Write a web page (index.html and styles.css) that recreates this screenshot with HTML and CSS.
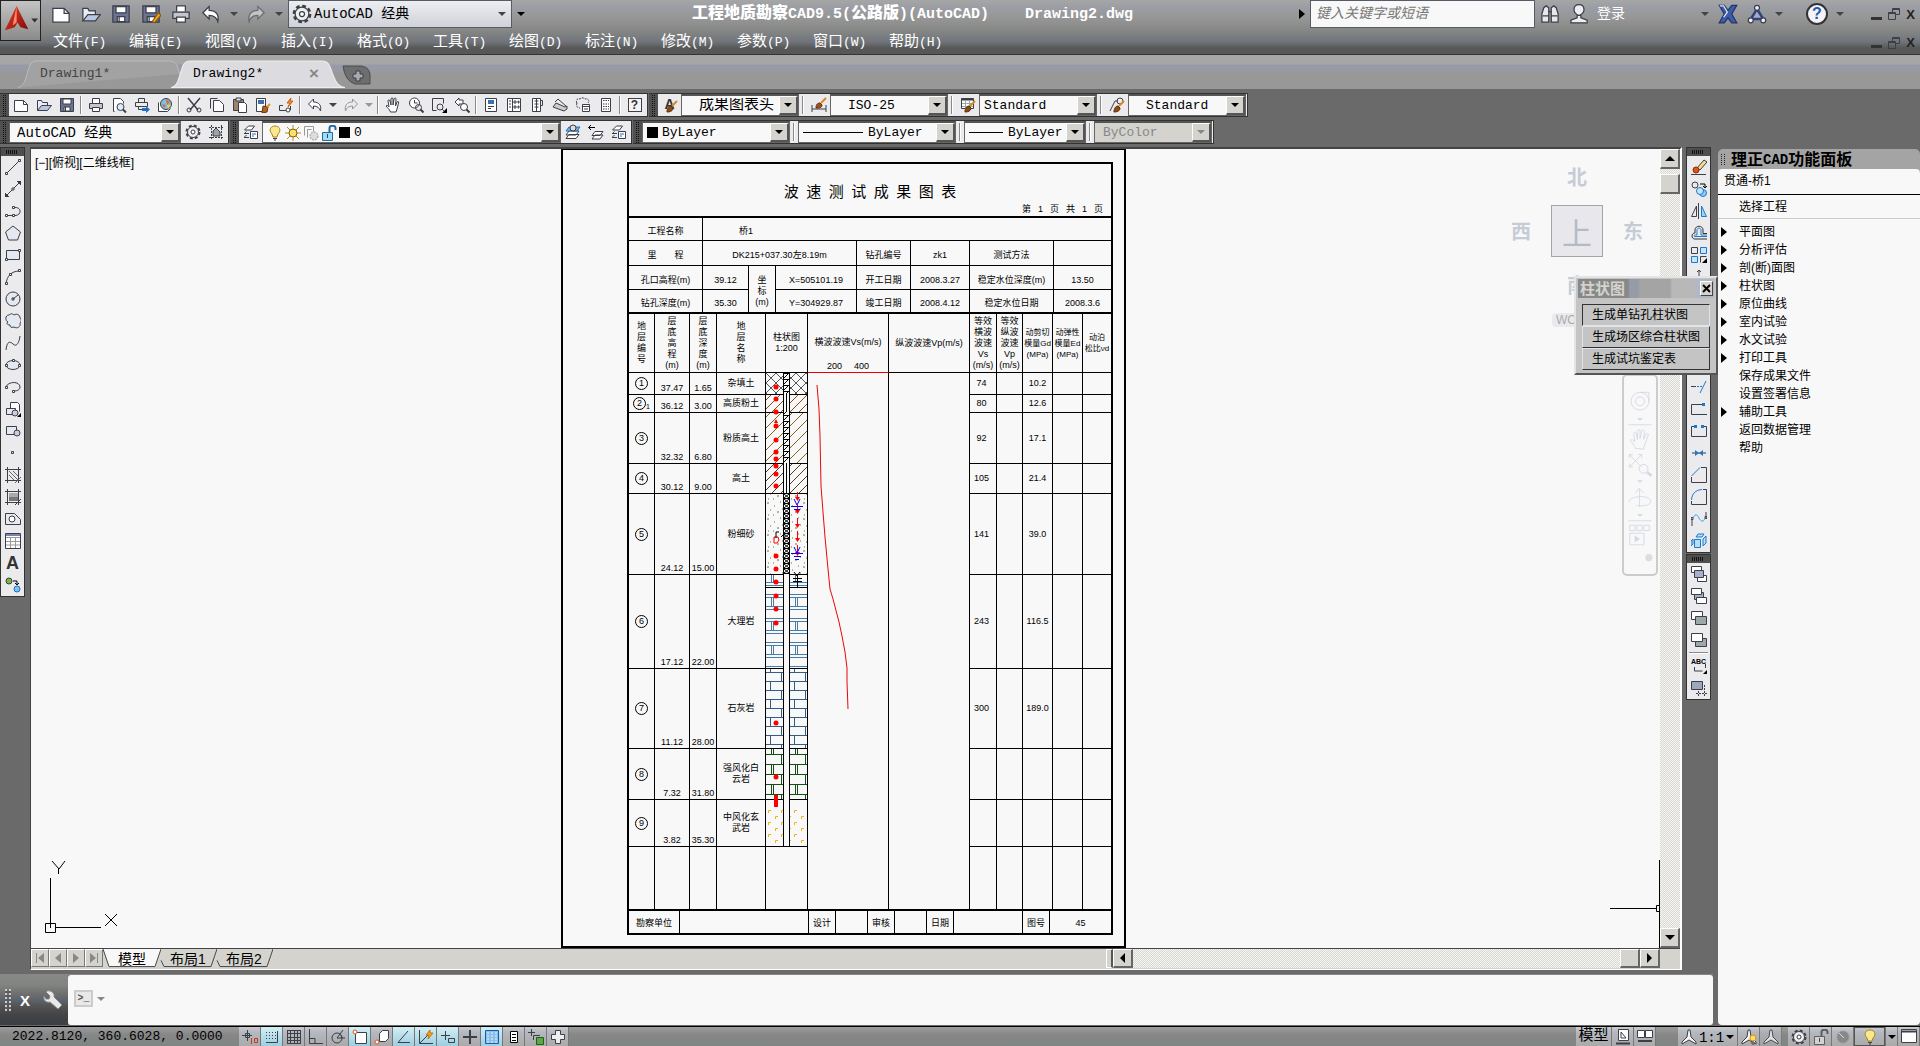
FILE: index.html
```html
<!DOCTYPE html>
<html lang="zh-CN">
<head>
<meta charset="utf-8">
<title>工程地质勘察CAD9.5(公路版)(AutoCAD) Drawing2.dwg</title>
<link rel="stylesheet" href="styles.css">
</head>
<body>
<svg class="defs" aria-hidden="true">
  <defs>
    <linearGradient id="g-red" x1="0" y1="0" x2="1" y2="1"><stop offset="0" stop-color="#f0402a"/><stop offset="1" stop-color="#7c0c06"/></linearGradient>
    <pattern id="p-cross" width="10" height="10" patternUnits="userSpaceOnUse"><path d="M0 0 10 10M10 0 0 10" stroke="#555" fill="none"/></pattern>
    <pattern id="p-d1" width="9" height="9" patternUnits="userSpaceOnUse"><path d="M-1 10 10 -1M-1 1 1 -1M8 10 10 8" stroke="#8a4a14"/></pattern>
    <pattern id="p-d2" width="11" height="11" patternUnits="userSpaceOnUse"><path d="M-1 12 12 -1M-1 1 1 -1M10 12 12 10" stroke="#846414"/></pattern>
    <pattern id="p-d3" width="9" height="9" patternUnits="userSpaceOnUse"><path d="M-1 10 10 -1M-1 1 1 -1M8 10 10 8" stroke="#553a1c"/></pattern>
    <pattern id="p-dots" width="18" height="16" patternUnits="userSpaceOnUse"><path d="M1 2h2M8 5h1M14 1h1M4 9h1M11 11h2M16 8h1M2 14h1M7 14h1" stroke="#6b7434"/></pattern>
    <pattern id="p-b6" width="24" height="24" y="212" patternUnits="userSpaceOnUse"><path d="M0 .5h24M0 9.500h24M0 12.500h24M0 21.500h24M5.500 12v9M7.500 12v9M17.500 0v9" stroke="#4a7ca8" fill="none"/></pattern>
    <pattern id="p-b7" width="24" height="18" y="299" patternUnits="userSpaceOnUse"><path d="M0 .5h24M0 9.500h24M4.500 9v9M15.500 0v9" stroke="#345c88" fill="none"/></pattern>
    <pattern id="p-b8" width="24" height="20" y="381" patternUnits="userSpaceOnUse"><path d="M0 .5h24M0 10.500h24M5.500 10v10M7.500 10v10M15.500 0v10M17.500 0v10" stroke="#145014" fill="none"/></pattern>
    <pattern id="p-b9" width="13" height="12" y="437" patternUnits="userSpaceOnUse"><path d="M2.500 3V.5H5M9.500 9V6.500H12" stroke="#f0b410" fill="none"/></pattern>
    <pattern id="p-lad" width="6" height="6" x="17" patternUnits="userSpaceOnUse"><path d="M0 .5h6M1 5 5 1" stroke="#000"/></pattern>
    <pattern id="p-xx" width="6" height="5" x="17" patternUnits="userSpaceOnUse"><path d="M0 .5h6M1 1 6 5M6 1 1 5" stroke="#000"/></pattern>
  </defs>
  <symbol id="new" viewBox="0 0 16 16"><path d="M1.500 3.500h9l4 4v7h-13z" fill="#fff"/><path d="M10.500 3.500v4h4"/></symbol>
  <symbol id="open" viewBox="0 0 16 16"><path d="M1.500 13.500v-10h4l1 2h5v3" fill="#e8eef8"/><path d="M1.500 13.500l4-5h10l-4 5z" fill="#b8c8e4"/></symbol>
  <symbol id="save" viewBox="0 0 16 16"><path d="M1.500 1.500h13v13h-13z" fill="#6c7494"/><path d="M4 2h8v5H4zM5 10h6v4H5z" fill="#fff"/><path d="M6.500 10v4"/></symbol>
  <symbol id="saveas" viewBox="0 0 16 16"><use href="#save"/><path d="M9 14 14 7l2 2-5 6z" fill="#f0a828" stroke="#8a5a10"/></symbol>
  <symbol id="print" viewBox="0 0 16 16"><path d="M4.500 6V1.500h7V6" fill="#fff"/><path d="M1.500 6.500h13v5h-13z" fill="#c4c6cc"/><path d="M4.500 10.500h7v4h-7z" fill="#fff"/></symbol>
  <symbol id="preview" viewBox="0 0 16 16"><path d="M3.500 14.500h-1v-13h7l3 3v2" fill="#fff"/><circle cx="9.500" cy="10" r="3.500" fill="#dcebf8"/><path d="M12 12.500l3 3" stroke-width="2"/></symbol>
  <symbol id="publish" viewBox="0 0 16 16"><path d="M4.500 5V1.500h6V5M1.500 5.500h12v4h-12zM4.500 9.500v3h4"/><path d="M8 11h4V9l4 3.500-4 3.500v-2H8z" fill="#1f6fc4" stroke="none"/></symbol>
  <symbol id="globe" viewBox="0 0 16 16"><path d="M1.500 5.500v9h9l3-3" fill="#fff"/><circle cx="9" cy="7" r="5.500" fill="#7cc0e8"/><path d="M9 2l4 3-3 3zM5 7l4 1-2 3z" fill="#e0682c" stroke="none"/><path d="M10 8h4l-3 4z" fill="#f4cc30" stroke="none"/></symbol>
  <symbol id="cut" viewBox="0 0 16 16"><path d="M2 1l10 12M14 1 4 13" stroke-width="1.500"/><circle cx="3" cy="13" r="2"/><circle cx="13" cy="13" r="2"/></symbol>
  <symbol id="copy" viewBox="0 0 16 16"><path d="M1.500 11.500v-10h7"/><path d="M4.500 3.500h6l4 4v7h-10z" fill="#fff"/></symbol>
  <symbol id="paste" viewBox="0 0 16 16"><path d="M1.500 2.500h10v11h-10z" fill="#9c8468"/><path d="M4 1h5v3H4z" fill="#ddd"/><path d="M6.500 5.500h6l2 2v8h-8z" fill="#fff"/></symbol>
  <symbol id="match" viewBox="0 0 16 16"><path d="M1.500 1.500h9v13h-9z" fill="#fff"/><path d="M3 3h6v4H3z" fill="#3870b4" stroke="none"/><path d="M8 9l5 1-1 5-5 1z" fill="#b4641c" stroke="#6a3408"/><path d="M12 10l3-3" stroke="#e09030" stroke-width="2"/></symbol>
  <symbol id="block" viewBox="0 0 16 16"><path d="M5 8.500H1.500v5h9M12.500 9v4"/><circle cx="10" cy="13" r="2" fill="#fff"/><path d="M13 1 9 6h3l-2 4 5-6h-3z" fill="#f09020" stroke="#c86010"/></symbol>
  <symbol id="undo" viewBox="0 0 16 16"><path d="M1.500 7l5-5v3c6 0 8 4 7 9-1-3-3-5-7-5v3z" fill="#fff"/></symbol>
  <symbol id="redo" viewBox="0 0 16 16"><path d="M14.500 7l-5-5v3c-6 0-8 4-7 9 1-3 3-5 7-5v3z" fill="#eee"/></symbol>
  <symbol id="hand" viewBox="0 0 16 16"><path d="M5.500 15c-1-3-3-4-4.500-6 1-1.500 2.500 0 3 1L3 4c0-1.500 1.500-1.500 2 0l1 4V2c0-1.500 2-1.500 2 0v6l1-6c.5-1.500 2-1 2 0l-.5 7 1.500-4c1-1 2-.5 1.500 1L12 12l-1 3z" fill="#fff"/></symbol>
  <symbol id="zoomrt" viewBox="0 0 16 16"><circle cx="6.500" cy="6" r="5" fill="#fff"/><path d="M6.500 3v3h3"/><circle cx="10.500" cy="10.500" r="3"/><path d="M12.500 12.500l3 3" stroke-width="2"/></symbol>
  <symbol id="zoomwin" viewBox="0 0 16 16"><path d="M1.500 1.500h11v5M1.500 1.500v12h4"/><circle cx="9" cy="10" r="3"/><path d="M11 12l2 2"/><path d="M16 11v5h-5z" fill="#000" stroke="none"/></symbol>
  <symbol id="zoomprev" viewBox="0 0 16 16"><path d="M1 5l4-4v2h4v4H5v2z" fill="#fff"/><circle cx="10" cy="10" r="3.500" fill="#fff"/><path d="M12.500 12.500l3 3" stroke-width="2"/></symbol>
  <symbol id="props" viewBox="0 0 16 16"><path d="M2.500 1.500h11v13h-11z" fill="#fff"/><path d="M5 3h6v4H5z" fill="#3870b4" stroke="none"/><path d="M5 9.500h6M5 11.500h3"/></symbol>
  <symbol id="dc" viewBox="0 0 16 16"><path d="M1.500 1.500h13v13h-13z" fill="#fff"/><path d="M6.500 2v12M3 4h2M3 7h2M3 10h2M8 4h2v2H8zM12 4h1v2h-1zM8 9h2v2H8zM12 9h1v2h-1z"/></symbol>
  <symbol id="tp" viewBox="0 0 16 16"><path d="M3.500 1.500h8v13h-8z" fill="#fff"/><path d="M11.500 3.500h2v5h-2M5.500 4h4M5.500 7h4M5.500 10h4M7.500 2v12"/></symbol>
  <symbol id="ssm" viewBox="0 0 16 16"><path d="M1 10l3-4 9 4 2-1v3l-3 2z" fill="#ccc"/><path d="M3 5l3-3 8 7"/></symbol>
  <symbol id="markup" viewBox="0 0 16 16"><path d="M2 6c-2-3 1-5 3-4 2-2 4-1 5 0 3-1 5 2 3 4M2 6c-1 3 0 5 3 5" stroke-dasharray="2 1"/><path d="M7.500 7.500h7v7h-7z" fill="#fff"/><path d="M8 9.500h6M9 12h4"/></symbol>
  <symbol id="calc" viewBox="0 0 16 16"><path d="M3.500 1.500h9v13h-9z" fill="#fff"/><path d="M5 3.500h6M5 7h6M5 9.500h6M5 12h6" stroke-dasharray="1.500 1"/></symbol>
  <symbol id="brush" viewBox="0 0 16 16"><path d="M10 9l5-5" stroke="#d88a20" stroke-width="2"/><path d="M5 15c0-4 2-6 4-6l2 2c0 3-3 4-6 4z" fill="#8a4a14" stroke="#5c2c08"/></symbol>
  <symbol id="dimst" viewBox="0 0 16 16"><path d="M1 8v7M15 8v7M1 12h14"/><path d="M10 6l5-5" stroke="#d88a20" stroke-width="2"/><path d="M5 11c0-4 2-5 4-5l2 2c0 3-3 3-6 3z" fill="#a05020" stroke="#5c2c08"/></symbol>
  <symbol id="tabst" viewBox="0 0 16 16"><path d="M1.500 1.500h12v10h-12z" fill="#fff"/><path d="M1.500 2.500h12" stroke-width="2"/><path d="M2 6.500h11M2 9.500h11M5.500 3v9M9.500 3v9" stroke="#9aa"/><use href="#brush"/></symbol>
  <symbol id="mlst" viewBox="0 0 16 16"><path d="M1 14 6 4h3"/><circle cx="11" cy="4" r="3"/><use href="#brush"/></symbol>
  <symbol id="gear" viewBox="0 0 16 16"><circle cx="8" cy="8" r="6.500" stroke-width="2" stroke-dasharray="3 2.100"/><circle cx="8" cy="8" r="5.500" fill="#eee"/><circle cx="8" cy="8" r="2" fill="#fff"/></symbol>
  <symbol id="wsave" viewBox="0 0 16 16"><path d="M1 3.500h14M1 13.500h14M3.500 1v14M13.500 1v14" stroke-dasharray="2 1"/><path d="M5 12V7l3-3 4 4v4z" fill="#9ca4a8"/></symbol>
  <symbol id="layers" viewBox="0 0 16 16"><path d="M1.500 6l4-4h6l-3 4zM1.500 9.500l2-2M1.500 13l2-2" fill="#fff"/><path d="M1 9.500h5M1 13.500h5"/><path d="M7.500 7.500h7v7h-7z" fill="#fff"/><path d="M9 10h4M9 12h2" stroke="#1f6fc4"/></symbol>
  <symbol id="laycur" viewBox="0 0 16 16"><path d="M1 14.500l3-4h10l-3 4zM1 11l3-4h10l-3 4z" fill="#fff"/><path d="M1 7l3-4h11l-3 4z" fill="#6cb4ec" stroke="#1f6fc4"/><circle cx="8" cy="4" r="3" fill="#ddd"/></symbol>
  <symbol id="layprev" viewBox="0 0 16 16"><path d="M1 3.500h6M3 1 .5 3.500 3 6" stroke="#000"/><path d="M4 15l3-4h8l-3 4zM4 11.500l3-4h8l-3 4z" fill="#fff"/></symbol>
  <symbol id="bulb" viewBox="0 0 16 16"><path d="M5 9C1 5 4 1 8 1s7 4 3 8l-1 3H6z" fill="#fbe88c" stroke="#a88420"/><path d="M6 13.500h4M7 15h2"/></symbol>
  <symbol id="sun" viewBox="0 0 16 16"><path d="M8 0v16M0 8h16M2 2l12 12M14 2 2 14" stroke="#b89018"/><circle cx="8" cy="8" r="4" fill="#fbe070" stroke="#806010"/></symbol>
  <symbol id="vpf" viewBox="0 0 16 16"><g stroke="#999"><path d="M1.500 10.500v-9h9v5M4.500 12.500v-8h4"/><circle cx="11" cy="11" r="4" fill="#ddd" stroke-dasharray="2 1"/></g></symbol>
  <symbol id="lock" viewBox="0 0 16 16"><path d="M8.500 7V3c0-3 6-3 6 0v2" stroke="#2468a4" stroke-width="2"/><path d="M1.500 7.500h10v8h-10z" fill="#a4dcf0" stroke="#2468a4"/><path d="M6.500 9v4" stroke="#145088"/></symbol>
  <symbol id="line" viewBox="0 0 16 16"><path d="M2 14 14 2"/><path d="M.5 13.500h2v2h-2zM13.500.5h2v2h-2z" fill="#fff"/></symbol>
  <symbol id="xline" viewBox="0 0 16 16"><path d="M2 14 14 2"/><path d="M0 16v-4l4 4zM16 0v4l-4-4z" fill="#333"/><path d="M7 7h2v2H7z" fill="#fff"/></symbol>
  <symbol id="pline" viewBox="0 0 16 16"><path d="M2 12.500h6M9 4.500c8-1 8 8 1 8"/><path d="M.5 11.500h2v2h-2zM7.500 11.500h2v2h-2zM7.500 3.500h2v2h-2z" fill="#fff"/></symbol>
  <symbol id="poly" viewBox="0 0 16 16"><path d="M8 1l7.500 6-3 8h-9l-3-8z" fill="#e4e8f0"/></symbol>
  <symbol id="rect" viewBox="0 0 16 16"><path d="M1.500 3.500h13v9h-13z" fill="#e4e8f0"/><path d="M.5 11.500h2v2h-2zM13.500 2.500h2v2h-2z" fill="#fff"/></symbol>
  <symbol id="arc" viewBox="0 0 16 16"><path d="M1 15C2 7 6 2 15 2"/><path d="M.5 13.500h2v2h-2zM4.500 4.500h2v2h-2zM13.500.5h2v2h-2z" fill="#fff"/></symbol>
  <symbol id="circ" viewBox="0 0 16 16"><circle cx="8" cy="8" r="7" fill="#e4e8f0"/><path d="M8 8l5-4M7 7h2v2H7z"/></symbol>
  <symbol id="cloud" viewBox="0 0 16 16"><path d="M3 9C0 8 0 2 4 2c2-2 4-1 5 0 3-2 6 0 6 3 2 2 1 4 0 5 1 4-3 6-6 4-3 1-4 0-4-2-3 0-4-2-2-3z" fill="#e4e8f0"/></symbol>
  <symbol id="spline" viewBox="0 0 16 16"><path d="M1 15c1-9 4-9 7-6s6 0 7-8"/></symbol>
  <symbol id="ell" viewBox="0 0 16 16"><ellipse cx="8" cy="8" rx="7" ry="4.500" fill="#e4e8f0"/><path d="M.5 7.500h2v2h-2zM13.500 7.500h2v2h-2zM7.500 2.500h2v2h-2z" fill="#fff"/></symbol>
  <symbol id="ellarc" viewBox="0 0 16 16"><path d="M1 8c2-6 14-6 14 0 0 3-3 4-6 4"/><path d="M.5 7.500h2v2h-2zM7.500 11.500h2v2h-2z" fill="#fff"/></symbol>
  <symbol id="ins" viewBox="0 0 16 16"><path d="M5.500 7V1.500h7l2 2v7" fill="#fff"/><path d="M1.500 7.500h9v6h-9z" fill="#e4e8f0"/><circle cx="10" cy="12" r="3" fill="#ccd"/><path d="M16 12v4h-4z" fill="#000" stroke="none"/></symbol>
  <symbol id="mkblk" viewBox="0 0 16 16"><path d="M1.500 3.500h10v8h-10z" fill="#e4e8f0"/><circle cx="12" cy="10" r="3" fill="#ccd"/></symbol>
  <symbol id="pt" viewBox="0 0 16 16"><path d="M6.500 6.500h2v2h-2z"/></symbol>
  <symbol id="hatch" viewBox="0 0 16 16"><path d="M0 2.500h16M0 13.500h16M2.500 0v16M13.500 0v16"/><path d="M4 4l9 9M4 8l5 5M8 4l5 5M10 16l6-6" stroke="#666"/></symbol>
  <symbol id="grad" viewBox="0 0 16 16"><path d="M4 4h9v4H4z" fill="#aaa" stroke="none"/><path d="M4 8h9v4H4z" fill="#777" stroke="none"/><path d="M0 2.500h16M0 13.500h16M2.500 0v16M13.500 0v16M10 16l6-6"/></symbol>
  <symbol id="region" viewBox="0 0 16 16"><path d="M.5 2.500h9l6 6v5H.5z" fill="#e8eaf0"/><circle cx="7" cy="8" r="3" fill="#fff"/></symbol>
  <symbol id="table" viewBox="0 0 16 16"><path d="M.5.500h15v15H.5z" fill="#fff"/><path d="M1 2h14" stroke="#7880b4" stroke-width="2"/><path d="M1 4.500h14M1 8.500h14M1 12h14M5.500 5v10M10.500 5v10" stroke="#999"/></symbol>
  <symbol id="addsel" viewBox="0 0 16 16"><circle cx="4" cy="4" r="3" fill="#78b83c"/><circle cx="12" cy="12" r="3" fill="#7cc4f0" stroke="#1f6fc4"/><path d="M8 4h4v3M10 6l2 2 2-2" stroke="#000"/></symbol>
  <symbol id="erase" viewBox="0 0 16 16"><path d="M0 15.500h15"/><path d="M6 9l7-8 3 2-7 8z" fill="#f4dc8c"/><circle cx="5" cy="11" r="3" fill="#e0541c" stroke="#8c2c08"/></symbol>
  <symbol id="mcopy" viewBox="0 0 16 16"><circle cx="4" cy="4" r="3"/><path d="M9 3h5v3M12 5l2 2 2-2" stroke="#000"/><circle cx="12" cy="12" r="3.500" fill="#8ccff4" stroke="#1f78cc"/><circle cx="9" cy="10" r="3.500" fill="#c4e6f8" stroke="#1f78cc"/></symbol>
  <symbol id="mirror" viewBox="0 0 16 16"><path d="M5.500 3v10.500h-5zM7.500 0v16"/><path d="M10.500 3v10.500h5z" fill="#9cd4f4" stroke="#1f78cc"/></symbol>
  <symbol id="offset" viewBox="0 0 16 16"><path d="M16 8.500h-4V5c0-5-8-5-8 0v3c-4 0-4 6 0 6h12" stroke="#333"/><path d="M16 11.500H4c-2 0-1-2 2-1.500V5c0-2.500 4-2.500 4 0v5h6" stroke="#1f78cc"/></symbol>
  <symbol id="array" viewBox="0 0 16 16"><path d="M.5.500h6v6h-6z"/><path d="M9.500.500h6v6h-6zM.5 9.500h6v6h-6z" fill="#c4e6f8" stroke="#1f78cc"/><path d="M9.500 15.500v-6h6"/><path d="M16 11v5h-5z" fill="#000" stroke="none"/></symbol>
  <symbol id="move" viewBox="0 0 16 16"><path d="M8 1v14M1 8h14M6 3l2-2 2 2M6 13l2 2 2-2"/></symbol>
  <symbol id="extend" viewBox="0 0 16 16"><path d="M0 7.500h5"/><path d="M6 7.500h6" stroke="#1f78cc" stroke-dasharray="2 1"/><path d="M9 14l6-12" stroke="#1f78cc"/></symbol>
  <symbol id="brkpt" viewBox="0 0 16 16"><path d="M12 3.500H.5v10H16" fill="#e8eaf0"/><path d="M11 2h3v3h-3z" fill="#1f78cc" stroke="none"/></symbol>
  <symbol id="brk" viewBox="0 0 16 16"><path d="M3 3.500H.5v10h15v-10H13" fill="#e8eaf0"/><path d="M3 2h3v3H3zM10 2h3v3h-3z" fill="#1f78cc" stroke="none"/></symbol>
  <symbol id="join" viewBox="0 0 16 16"><path d="M1 8h14"/><path d="M4 5l4 3-4 3zM12 5 8 8l4 3z" fill="#1f78cc" stroke="none"/></symbol>
  <symbol id="chamf" viewBox="0 0 16 16"><path d="M10 .5h5.500v15H.5V10"/><path d="M.5 9 9 .5" stroke="#1f78cc"/></symbol>
  <symbol id="fillet" viewBox="0 0 16 16"><path d="M12 .5h3.500v15H.5V12"/><path d="M.5 11C1 5 4 1 11 .5" stroke="#1f78cc"/></symbol>
  <symbol id="blend" viewBox="0 0 16 16"><path d="M1 8v7M15 1v7M0 6.500h2v2H0zM14 5.500h2v2h-2z"/><path d="M2 7c3-6 5-2 6 0s4 6 6 0" stroke="#38a0e4"/></symbol>
  <symbol id="explode" viewBox="0 0 16 16"><path d="M3.500 6.500h6v8h-6zM5 4l2-3h6l-2 3zM12 6l3-3v7l-3 3zM0 8l2-2v5l-2 2z" fill="#b4e0f4" stroke="#1f78cc"/></symbol>
  <symbol id="dr1" viewBox="0 0 16 16"><path d="M.5.500h10v6H.5zM6.500 9.500h9v6h-9z" fill="#fff"/><path d="M3.500 4.500h9v7h-9z" fill="#a4b0cc"/></symbol>
  <symbol id="dr2" viewBox="0 0 16 16"><path d="M3.500 4.500h9v7h-9z" fill="#a4b0cc"/><path d="M.5.500h10v6H.5zM5.500 9.500h10v6h-10z" fill="#fff"/></symbol>
  <symbol id="dr3" viewBox="0 0 16 16"><path d="M.5 1.500h11v8H.5z" fill="#fff"/><path d="M4.500 6.500h11v8h-11z" fill="#9ca8a8"/></symbol>
  <symbol id="dr4" viewBox="0 0 16 16"><path d="M4.500 6.500h11v8h-11z" fill="#9ca8a8"/><path d="M.5 1.500h11v8H.5z" fill="#fff"/></symbol>
  <symbol id="drabc" viewBox="0 0 16 16"><path d="M3.500 9v4h8M14.500 6v4"/><path d="M16 12v4h-4z" fill="#000" stroke="none"/></symbol>
  <symbol id="drh" viewBox="0 0 16 16"><path d="M.5 1.500h11v8H.5z" fill="#9ca8bc"/><path d="M5 13.500h11M7.500 11v5M13.500 5v11" stroke-dasharray="2 1"/></symbol>
  <symbol id="snap" viewBox="0 0 16 16"><path d="M2 3.500h10M2 6.500h10M2 9.500h10" stroke-dasharray="1 2"/><path d="M13.500 2v11.500H2"/></symbol>
  <symbol id="infer" viewBox="0 0 16 16"><path d="M0 6.500h10M5.500 1v11M3.500 4.500h4v4h-4z"/><path d="M9.500 9v6M12.500 9.500h3v4h-3z" stroke="#c83818"/></symbol>
  <symbol id="grid" viewBox="0 0 16 16"><path d="M1 1.500h14M1 4.500h14M1 8.500h14M1 11.500h14M1 14.500h14M1.500 1v14M4.500 1v14M8.500 1v14M11.500 1v14M14.500 1v14"/></symbol>
  <symbol id="ortho" viewBox="0 0 16 16"><path d="M1.500 0v14.500H15M2 9.500h5v5"/></symbol>
  <symbol id="polar" viewBox="0 0 16 16"><circle cx="7" cy="9" r="5"/><path d="M7 9h8M7 9l6-8M11 6l1 3"/></symbol>
  <symbol id="osnap" viewBox="0 0 16 16"><path d="M3.500 3.500h11v11h-11z" fill="#fff"/><circle cx="3" cy="3" r="2" stroke="#e0541c" fill="#fff"/></symbol>
  <symbol id="osnap3" viewBox="0 0 16 16"><path d="M5.500 4.500l3-3h6v8l-3 3h-6z" fill="#fff"/><circle cx="3" cy="13" r="2" stroke="#e0541c" fill="#fff"/></symbol>
  <symbol id="otrack" viewBox="0 0 16 16"><path d="M14 13.500H2L12 2"/></symbol>
  <symbol id="ducs" viewBox="0 0 16 16"><path d="M1.500 1v13.500H15M2 14l8-8"/><path d="M12 1 8 6h3l-1 4 5-6h-3z" fill="#f4a820" stroke="#c87010"/></symbol>
  <symbol id="dyn" viewBox="0 0 16 16"><path d="M1 6.500h9M5.500 2v9M8.500 9.500h6v4h-6z"/></symbol>
  <symbol id="lwt" viewBox="0 0 16 16"><path d="M1 8h14M8 1v14" stroke-width="2"/></symbol>
  <symbol id="tpy" viewBox="0 0 16 16"><path d="M1.500 1.500h13v13h-13z" fill="#8cc0e8" stroke="#1060b0"/><path d="M3 4h10M3 7h10M3 10h10M3 13h10" stroke="#e4f2fc" stroke-dasharray="2 2"/></symbol>
  <symbol id="qp" viewBox="0 0 16 16"><path d="M4.500 2.500h7v11h-7z" fill="#fff" stroke="#000"/><path d="M6 5.500h4M6 8.500h4M6 11.500h4" stroke="#000"/></symbol>
  <symbol id="sc" viewBox="0 0 16 16"><path d="M0 3.500h7M3.500 0v7M5.500 11V6.500H12"/><path d="M8.500 8.500h7v7h-7z" fill="#5ca848" stroke="#206014"/></symbol>
  <symbol id="plus" viewBox="0 0 16 16"><path d="M5.500 1.500h5v4h4v5h-4v4h-5v-4h-4v-5h4z" fill="#eee"/></symbol>
  <symbol id="anno" viewBox="0 0 16 16"><path d="M7 1h2l1 7 5 5v2l-7-4-7 4v-2l5-5z" fill="#f4f4f4"/></symbol>
  <symbol id="annob" viewBox="0 0 16 16"><use href="#anno"/><circle cx="12" cy="9" r="3" fill="#fce060" stroke="#e08818"/><path d="M11 13h2v2h-2z" fill="#fff"/></symbol>
  <symbol id="lay1" viewBox="0 0 16 16"><path d="M3.500.500h10v11h-10z" fill="#fff"/><path d="M6 3v6h5z"/><path d="M1 14.500h14" stroke-width="2"/></symbol>
  <symbol id="lay2" viewBox="0 0 16 16"><path d="M.5 1.500h7v7h-7zM8.500 1.500h7v7h-7z" fill="#fff"/><path d="M1 12h14" stroke-width="2"/></symbol>
  <symbol id="dot" viewBox="0 0 16 16"><circle cx="8" cy="8" r="6" fill="#888" stroke="#999"/><path d="M4 4l5 5" stroke="#ddd"/></symbol>
  <symbol id="win" viewBox="0 0 16 16"><path d="M.5.500h15v13H.5z" fill="#fff"/><path d="M1 2.500h14" stroke-width="2"/></symbol>
  <symbol id="bino" viewBox="0 0 16 16"><path d="M1.500 8l1.500-5 2-1.500L7 3v11.500H1.500zM14.500 8 13 3l-2-1.500L9 3v11.500h5.500z" fill="#e8e8ec"/><path d="M2 9.500h5M9 9.500h5M7 6h2"/></symbol>
  <symbol id="person" viewBox="0 0 16 16"><path d="M8 .5c3 0 4 2 4 4S10 9 8 9 4 6.500 4 4.500 5 .5 8 .5zM6.500 9v2l-5 2v2h13v-2l-5-2V9" fill="#eceef4"/></symbol>
  <symbol id="xch" viewBox="0 0 16 16"><path d="M1 1h4l3 4 3-4h4l-4 7 4 7h-4l-3-4-3 4H1l4-7z" fill="#3c5ca8" stroke="#223468"/><path d="M1.500 1.500h3l3 5-3 4" stroke="#dce4f4"/></symbol>
  <symbol id="a360" viewBox="0 0 16 16"><path d="M8 4l5 8H3z" fill="#aab" stroke="#2c4484" stroke-width="2"/><circle cx="8" cy="3" r="2" fill="#eef"/><circle cx="3" cy="13" r="2" fill="#eef"/><circle cx="13" cy="13" r="2" fill="#eef"/></symbol>
  <symbol id="winrest" viewBox="0 0 12 12"><path d="M4.500 4V.500h7v6H8M.5 4.500h7v7h-7z"/><path d="M4.500 1.500h7M.5 5.500h7"/></symbol>
  <symbol id="wrench" viewBox="0 0 20 20"><path d="M3 2l4 4-1 3-3 0-2-3c-1 4 2 7 6 6l8 7 4-4-8-8c1-4-3-7-7-6z" fill="#e8e8e8" stroke="#888"/></symbol>
</svg>

<header class="top">
  <button class="app" aria-label="应用程序菜单"><svg viewBox="0 0 40 40"><path d="M16 5l12 24-8-2-3-5-3 5-10 3z" fill="url(#g-red)"/><path d="M16 5l-4 20 4-3z" fill="#ff8a70"/><path d="M31 18h7l-3.500 4z" fill="#333"/></svg></button>
  <div class="top-rows">
    <div class="title-row">
      <div class="qat">
        <button aria-label="新建"><svg><use href="#new"/></svg></button>
        <button aria-label="打开"><svg><use href="#open"/></svg></button>
        <button aria-label="保存"><svg><use href="#save"/></svg></button>
        <button aria-label="另存为"><svg><use href="#saveas"/></svg></button>
        <button aria-label="打印"><svg><use href="#print"/></svg></button>
        <button aria-label="放弃"><svg><use href="#undo"/></svg></button>
        <button class="dd" aria-label="放弃列表"><i class="tri"></i></button>
        <button class="dim" aria-label="重做"><svg><use href="#redo"/></svg></button>
        <button class="dd" aria-label="重做列表"><i class="tri"></i></button>
      </div>
      <label class="ws"><svg><use href="#gear"/></svg><select aria-label="工作空间"><option>AutoCAD 经典</option></select><i class="tri"></i></label>
      <button class="dd more" aria-label="自定义快速访问"><i class="tri black"></i></button>
      <h1><b>工程地质勘察</b>CAD9.5(<b>公路版</b>)(AutoCAD)<span>Drawing2.dwg</span></h1>
      <div class="info">
        <i class="tri-r"></i>
        <input type="text" placeholder="键入关键字或短语" aria-label="搜索">
        <button aria-label="搜索"><svg><use href="#bino"/></svg></button>
        <button class="login"><svg><use href="#person"/></svg>登录</button>
        <button class="dd" aria-label="登录菜单"><i class="tri"></i></button>
        <button aria-label="Exchange"><svg><use href="#xch"/></svg></button>
        <button aria-label="Autodesk 360"><svg><use href="#a360"/></svg></button>
        <button class="dd" aria-label="联机菜单"><i class="tri"></i></button>
        <button class="q" aria-label="帮助">?</button>
        <button class="dd" aria-label="帮助菜单"><i class="tri"></i></button>
      </div>
      <div class="wc"><button aria-label="最小化"><i></i></button><button aria-label="还原"><svg><use href="#winrest"/></svg></button><button aria-label="关闭">X</button></div>
    </div>
    <nav class="menu">
      <a href="#">文件<s>(F)</s></a><a href="#">编辑<s>(E)</s></a><a href="#">视图<s>(V)</s></a><a href="#">插入<s>(I)</s></a><a href="#">格式<s>(O)</s></a><a href="#">工具<s>(T)</s></a><a href="#">绘图<s>(D)</s></a><a href="#">标注<s>(N)</s></a><a href="#">修改<s>(M)</s></a><a href="#">参数<s>(P)</s></a><a href="#">窗口<s>(W)</s></a><a href="#">帮助<s>(H)</s></a>
      <div class="wc"><button aria-label="最小化图形"><i></i></button><button aria-label="还原图形"><svg><use href="#winrest"/></svg></button><button aria-label="关闭图形">X</button></div>
    </nav>
  </div>
</header>

<div class="filetabs">
  <a class="ft" href="#"><svg viewBox="0 0 162 28" preserveAspectRatio="none"><path d="M0 27.500C8 26 8 14 12 5q2-4 7-4h132q6 0 8 5l3 8" /></svg><span>Drawing1*</span></a>
  <a class="ft on" href="#"><svg viewBox="0 0 170 28" preserveAspectRatio="none"><path d="M0 27.500C8 26 8 14 12 5q2-4 7-4h128q6 0 8 5c4 9 5 20 15 21.500z"/></svg><span>Drawing2*</span><em>×</em></a>
  <button class="addtab" aria-label="新图形"><svg viewBox="0 0 30 20"><path d="M1 1h19q8 2 8 9v9h-15Q3 16 1 1z" fill="#6e6e6e" stroke="#4c4c4c"/><path d="M14 6h4v3h3v4h-3v3h-4v-3h-3V9h3z" fill="#aaa"/></svg></button>
</div>

<div class="bars">
  <div class="barrow">
    <div class="bar"><i class="grip"></i>
      <button aria-label="新建"><svg><use href="#new"/></svg></button><button aria-label="打开"><svg><use href="#open"/></svg></button><button aria-label="保存"><svg><use href="#save"/></svg></button><i class="sep"></i>
      <button aria-label="打印"><svg><use href="#print"/></svg></button><button aria-label="预览"><svg><use href="#preview"/></svg></button><button aria-label="发布"><svg><use href="#publish"/></svg></button><button aria-label="三维DWF"><svg><use href="#globe"/></svg></button><i class="sep"></i>
      <button aria-label="剪切"><svg><use href="#cut"/></svg></button><button aria-label="复制"><svg><use href="#copy"/></svg></button><button aria-label="粘贴"><svg><use href="#paste"/></svg></button><button aria-label="特性匹配"><svg><use href="#match"/></svg></button><button aria-label="块编辑器"><svg><use href="#block"/></svg></button><i class="sep"></i>
      <button aria-label="放弃"><svg><use href="#undo"/></svg></button><button class="dd" aria-label="放弃列表"><i class="tri"></i></button><button class="dim" aria-label="重做"><svg><use href="#redo"/></svg></button><button class="dd dim" aria-label="重做列表"><i class="tri"></i></button><i class="sep"></i>
      <button aria-label="平移"><svg><use href="#hand"/></svg></button><button aria-label="实时缩放"><svg><use href="#zoomrt"/></svg></button><button aria-label="窗口缩放"><svg><use href="#zoomwin"/></svg></button><button aria-label="缩放上一个"><svg><use href="#zoomprev"/></svg></button><i class="sep"></i>
      <button aria-label="特性"><svg><use href="#props"/></svg></button><button aria-label="设计中心"><svg><use href="#dc"/></svg></button><button aria-label="工具选项板"><svg><use href="#tp"/></svg></button><button aria-label="图纸集"><svg><use href="#ssm"/></svg></button><button aria-label="标记集"><svg><use href="#markup"/></svg></button><button aria-label="计算器"><svg><use href="#calc"/></svg></button><i class="sep"></i>
      <button aria-label="帮助"><span class="boxed">?</span></button>
    </div>
    <div class="bar wide"><i class="grip"></i>
      <button class="stack" aria-label="文字样式"><span class="glyph-a">A</span><svg><use href="#brush"/></svg></button><label class="combo w-style zh"><select aria-label="文字样式"><option>成果图表头</option></select><i class="arrow"></i></label><i class="sep"></i>
      <button aria-label="标注样式"><svg><use href="#dimst"/></svg></button><label class="combo w-style in"><select aria-label="标注样式"><option>ISO-25</option></select><i class="arrow"></i></label><i class="sep"></i>
      <button aria-label="表格样式"><svg><use href="#tabst"/></svg></button><label class="combo w-style"><select aria-label="表格样式"><option>Standard</option></select><i class="arrow"></i></label><i class="sep"></i>
      <button aria-label="多重引线样式"><svg><use href="#mlst"/></svg></button><label class="combo w-style in"><select aria-label="多重引线样式"><option>Standard</option></select><i class="arrow"></i></label>
    </div>
  </div>
  <div class="barrow">
    <div class="bar"><i class="grip"></i>
      <label class="combo w-ws"><select aria-label="工作空间切换"><option>AutoCAD 经典</option></select><i class="arrow"></i></label>
      <button aria-label="工作空间设置"><svg><use href="#gear"/></svg></button><button aria-label="我的工作空间"><svg><use href="#wsave"/></svg></button>
    </div>
    <div class="bar"><i class="grip"></i>
      <button aria-label="图层特性"><svg><use href="#layers"/></svg></button>
      <label class="combo w-layer"><svg><use href="#bulb"/></svg><svg><use href="#sun"/></svg><svg><use href="#vpf"/></svg><svg><use href="#lock"/></svg><i class="sw"></i><select aria-label="图层"><option>0</option></select><i class="arrow"></i></label>
      <button aria-label="置为当前"><svg><use href="#laycur"/></svg></button><button aria-label="上一个图层"><svg><use href="#layprev"/></svg></button><button aria-label="图层状态"><svg><use href="#layers"/></svg></button>
    </div>
    <div class="bar wide"><i class="grip"></i>
      <label class="combo w-color"><i class="sw"></i><select aria-label="颜色"><option>ByLayer</option></select><i class="arrow"></i></label><i class="sep"></i>
      <label class="combo w-lt"><i class="ln"></i><select aria-label="线型"><option>ByLayer</option></select><i class="arrow"></i></label><i class="sep"></i>
      <label class="combo w-lw"><i class="ln short"></i><select aria-label="线宽"><option>ByLayer</option></select><i class="arrow"></i></label><i class="sep"></i>
      <label class="combo w-ps off"><select aria-label="打印样式" disabled><option>ByColor</option></select><i class="arrow"></i></label>
    </div>
  </div>
</div>

<div class="work">
  <div class="main">
    <div class="dock">
      <div class="vbar"><i class="vgrip"></i>
        <button aria-label="直线"><svg><use href="#line"/></svg></button><button aria-label="构造线"><svg><use href="#xline"/></svg></button><button aria-label="多段线"><svg><use href="#pline"/></svg></button><button aria-label="多边形"><svg><use href="#poly"/></svg></button><button aria-label="矩形"><svg><use href="#rect"/></svg></button><button aria-label="圆弧"><svg><use href="#arc"/></svg></button><button aria-label="圆"><svg><use href="#circ"/></svg></button><button aria-label="修订云线"><svg><use href="#cloud"/></svg></button><button aria-label="样条曲线"><svg><use href="#spline"/></svg></button><button aria-label="椭圆"><svg><use href="#ell"/></svg></button><button aria-label="椭圆弧"><svg><use href="#ellarc"/></svg></button><button aria-label="插入块"><svg><use href="#ins"/></svg></button><button aria-label="创建块"><svg><use href="#mkblk"/></svg></button><button aria-label="点"><svg><use href="#pt"/></svg></button><button aria-label="图案填充"><svg><use href="#hatch"/></svg></button><button aria-label="渐变色"><svg><use href="#grad"/></svg></button><button aria-label="面域"><svg><use href="#region"/></svg></button><button aria-label="表格"><svg><use href="#table"/></svg></button><button aria-label="多行文字"><span class="glyph-big">A</span></button><button aria-label="添加选定对象"><svg><use href="#addsel"/></svg></button>
      </div>
      <div class="doc">
        <div class="view">
          <div class="canvas">
            <div class="vplabel">[−][俯视][二维线框]</div>

            <div class="paper"><div class="sheet">
              <div class="sheet-title"><h2>波&ensp;速&ensp;测&ensp;试&ensp;成&ensp;果&ensp;图&ensp;表</h2><p>第&ensp;&nbsp;1&ensp;&nbsp;页&ensp;&nbsp;共&ensp;&nbsp;1&ensp;&nbsp;页</p></div>
              <table class="meta">
                <colgroup><col class="c74"><col class="c46"><col class="c27"><col class="c81"><col class="c54"><col class="c59"><col class="c84"><col></colgroup>
                <tr class="r23"><th>工程名称</th><td colspan="7" class="proj">桥1</td></tr>
                <tr class="r25"><th>里　　程</th><td colspan="3">DK215+037.30左8.19m</td><th>钻孔编号</th><td>zk1</td><th>测试方法</th><td></td></tr>
                <tr class="r24"><th>孔口高程(m)</th><td>39.12</td><th rowspan="2" class="tall">坐<br>标<br>(m)</th><td>X=505101.19</td><th>开工日期</th><td>2008.3.27</td><th>稳定水位深度(m)</th><td>13.50</td></tr>
                <tr class="r24 thick"><th>钻孔深度(m)</th><td>35.30</td><td>Y=304929.87</td><th>竣工日期</th><td>2008.4.12</td><th>稳定水位日期</th><td>2008.3.6</td></tr>
              </table>
              <table class="strata">
                <colgroup><col class="c26"><col class="c35"><col class="c27"><col class="c49"><col class="c42"><col class="c81"><col class="c81"><col class="c27"><col class="c26"><col class="c30"><col class="c30"><col></colgroup>
                <tr class="r59"><th>地<br>层<br>编<br>号</th><th>层<br>底<br>高<br>程<br>(m)</th><th>层<br>底<br>深<br>度<br>(m)</th><th>地<br>层<br>名<br>称</th><th>柱状图<br>1:200</th><th class="vs">横波波速Vs(m/s)<span><u>200</u><u>400</u></span></th><th>纵波波速Vp(m/s)</th><th>等效<br>横波<br>波速<br>Vs<br>(m/s)</th><th>等效<br>纵波<br>波速<br>Vp<br>(m/s)</th><th class="sm">动剪切<br>模量Gd<br>(MPa)</th><th class="sm">动弹性<br>模量Ed<br>(MPa)</th><th class="sm">动泊<br>松比νd</th></tr>
                <tr class="r22"><td><b>1</b></td><td class="lo">37.47</td><td class="lo">1.65</td><td>杂填土</td>
                  <td rowspan="9" class="plot"><svg viewBox="0 0 41 473">
                    <path d="M0 0h41v21H0z" fill="url(#p-cross)"/><path d="M0 22h41v17H0z" fill="url(#p-d1)"/><path d="M0 40h41v50H0z" fill="url(#p-d2)"/><path d="M0 91h41v29H0z" fill="url(#p-d3)"/><path d="M0 121h41v80H0z" fill="url(#p-dots)"/><path d="M0 202h41v93H0z" fill="url(#p-b6)"/><path d="M0 296h41v79H0z" fill="url(#p-b7)"/><path d="M0 376h41v50H0z" fill="url(#p-b8)"/><path d="M0 436h41v36H0z" fill="url(#p-b9)"/>
                    <path d="M0 21.500h41M0 39.500h41M0 90.500h41M0 120.500h41M0 201.500h41M0 295.500h41M0 375.500h41M0 426.500h41" stroke="#000"/>
                    <path d="M17 0h7v473h-7z" fill="#f8f8f8"/><path d="M17 0h7v21h-7zM17 39h7v51h-7z" fill="url(#p-lad)"/><path d="M17 120h7v81h-7z" fill="url(#p-xx)"/>
                    <path d="M17.500 0v473M23.500 0v473M20.500 21v18M20.500 90v30" stroke="#000"/>
                    <g fill="#f00"><circle cx="10" cy="14" r="2.500"/><circle cx="10" cy="26" r="2.500"/><circle cx="10" cy="39" r="2.500"/><circle cx="10" cy="53" r="2.500"/><path d="M10 46l2 4H8z"/><circle cx="10" cy="67" r="2.500"/><circle cx="10" cy="79" r="2.500"/><circle cx="10" cy="86" r="2.500"/><circle cx="10" cy="93" r="2.500"/><circle cx="10" cy="101" r="2.500"/><circle cx="10" cy="113" r="2.500"/><circle cx="10" cy="183" r="2.500"/><circle cx="10" cy="196" r="2.500"/><circle cx="10" cy="209" r="2.500"/><circle cx="10" cy="223" r="2.500"/><circle cx="10" cy="236" r="2.500"/><circle cx="10" cy="250" r="2.500"/><circle cx="10" cy="350" r="2.500"/><circle cx="10" cy="404" r="2.500"/><path d="M8 422h4v12H8z"/></g>
                    <path d="M8 164h4l1 3-2 3H8z" fill="none" stroke="#f00"/><path d="M13 159h-3v6M15 164l3-3v4" fill="none" stroke="#000"/>
                    <path d="M31.500 119v8M31.500 132v8M31.500 145v9M31.500 158v9M31.500 172v8" stroke="#f00" fill="none"/><path d="M29 124h5l-2.500 4zM29 137h5l-2.500 4zM29 151h5l-2.500 4zM29 165h5l-2.500 4zM29 179h5l-2.500 4z" fill="#f00"/>
                    <path d="M28 126l3 6 3-6M25 133.500h12M28 136.500h6M28 174l3 6 3-6M25 180.500h12M28 183.500h7M29 186.500h4" stroke="#00f" fill="none"/>
                    <path d="M28 199l3 4 3-4M27 205.500h9M27 208.500h9M31.500 203v12M0 214.500h17M24 214.500h17" stroke="#000" fill="none"/>
                  </svg></td>
                  <td rowspan="10" class="plot"><svg viewBox="0 0 80 536"><path d="M9 12l2 24 1 27 1 50 2 26 2 25 3 32 2 20 3 10 6 23 3 14 3 16 2 16 0 14 1 27" fill="none" stroke="#e80808"/></svg></td><td rowspan="10"></td>
                  <td class="n">74</td><td></td><td>10.2</td><td></td><td></td></tr>
                <tr class="r18"><td><b>2</b><sub>1</sub></td><td class="lo">36.12</td><td class="lo">3.00</td><td>高质粉土</td><td class="n">80</td><td></td><td>12.6</td><td></td><td></td></tr>
                <tr class="r51"><td><b>3</b></td><td class="lo">32.32</td><td class="lo">6.80</td><td>粉质高土</td><td class="n">92</td><td></td><td>17.1</td><td></td><td></td></tr>
                <tr class="r30"><td><b>4</b></td><td class="lo">30.12</td><td class="lo">9.00</td><td>高土</td><td class="n">105</td><td></td><td>21.4</td><td></td><td></td></tr>
                <tr class="r81"><td><b>5</b></td><td class="lo">24.12</td><td class="lo">15.00</td><td>粉细砂</td><td class="n">141</td><td></td><td>39.0</td><td></td><td></td></tr>
                <tr class="r94"><td><b>6</b></td><td class="lo">17.12</td><td class="lo">22.00</td><td>大理岩</td><td class="n">243</td><td></td><td>116.5</td><td></td><td></td></tr>
                <tr class="r80"><td><b>7</b></td><td class="lo">11.12</td><td class="lo">28.00</td><td>石灰岩</td><td class="n">300</td><td></td><td>189.0</td><td></td><td></td></tr>
                <tr class="r51"><td><b>8</b></td><td class="lo">7.32</td><td class="lo">31.80</td><td>强风化白<br>云岩</td><td></td><td></td><td></td><td></td><td></td></tr>
                <tr class="r47"><td><b>9</b></td><td class="lo">3.82</td><td class="lo">35.30</td><td>中风化玄<br>武岩</td><td></td><td></td><td></td><td></td><td></td></tr>
                <tr class="r64 thick"><td></td><td></td><td></td><td></td><td></td><td></td><td></td><td></td><td></td><td></td></tr>
              </table>
              <table class="foot">
                <colgroup><col class="c51"><col class="c129"><col class="c27"><col class="c32"><col class="c27"><col class="c32"><col class="c27"><col class="c69"><col class="c27"><col></colgroup>
                <tr class="r22"><th>勘察单位</th><td></td><th>设计</th><td></td><th>审核</th><td></td><th>日期</th><td></td><th>图号</th><td>45</td></tr>
              </table>
            </div></div>

            <svg class="ucs" viewBox="0 0 76 76"><path d="M6.500 18v50M11 67.500h46M1.500 63.500h10v9H1.500zM8 1l7 8 6-8M14.500 9v5M61 54l12 12M73 54 61 66" fill="none" stroke="#000"/></svg>
            <svg class="ucs2" viewBox="0 0 50 88"><path d="M49.500 0v88M0 48.500h46M46.500 45.500h4v6h-4z" fill="none" stroke="#000"/></svg>

            <div class="cube"><span class="n">北</span><span class="w">西</span><button>上</button><span class="e">东</span><span class="s">南</span><span class="wcs">WCS</span></div>
            <svg class="navbar" viewBox="0 0 36 202"><g fill="none" stroke="#d2d8e4"><circle cx="18" cy="18" r="10"/><circle cx="18" cy="18" r="5"/><path d="M28 8v10M18 8h10M5 44.500h26M5 152.500h26" /><path d="M13 71c-1-3-4-6-6-9 2-2 4 0 5 2l-1-10c1-2 3-1 3 1l1 6V51c1-2 3-1 3 0v9l2-9c1-1 3-1 3 1l-1 9 3-6c2-1 3 0 2 2l-4 11-1 4z"/><path d="M6 78l14 14M20 78 6 92M6 82v-4h4M16 78h4v4M6 88v4h4"/><circle cx="22" cy="94" r="5"/><path d="M26 98l5 4" stroke-width="3"/><path d="M17.500 117v20M13 121l4-5 5 5M6 131c-1-6 24-9 24 0 0 4-10 6-16 4M6.500 157.500h6v6h-6zM14.500 157.500h6v6h-6zM22.500 157.500h6v6h-6zM6.500 166.500h16v13h-16z"/></g><path d="M15 37h6l-3 3zM15 107h6l-3 3zM15 145h6l-3 3zM12 169l6 4-6 4z" fill="#d2d8e4"/><circle cx="28" cy="194" r="4" fill="#ddd"/></svg>
          </div>
          <div class="vscroll"><button aria-label="向上"><i class="t-up"></i></button><i class="track gap"></i><i class="thumb"></i><i class="track"></i><button aria-label="向下"><i class="t-dn"></i></button></div>
        </div>
        <div class="layout">
          <button class="nv" aria-label="第一个"><svg viewBox="0 0 12 12"><path d="M2 1h1v10H2zM10 1v10L4 6z"/></svg></button><button class="nv" aria-label="上一个"><svg viewBox="0 0 12 12"><path d="M9 1v10L3 6z"/></svg></button><button class="nv" aria-label="下一个"><svg viewBox="0 0 12 12"><path d="M3 1v10l6-5z"/></svg></button><button class="nv" aria-label="最后一个"><svg viewBox="0 0 12 12"><path d="M2 1v10l6-5zM9 1h1v10H9z"/></svg></button>
          <a class="lt on" href="#"><svg viewBox="0 0 58 20" preserveAspectRatio="none"><path d="M0 0l6 18.500h46L58 0"/></svg><span>模型</span></a>
          <a class="lt" href="#"><svg viewBox="0 0 58 20" preserveAspectRatio="none"><path d="M2 12l3 6.500h47L58 0"/></svg><span>布局1</span></a>
          <a class="lt" href="#"><svg viewBox="0 0 58 20" preserveAspectRatio="none"><path d="M2 12l3 6.500h47L58 0"/></svg><span>布局2</span></a>
          <i class="split"></i>
          <div class="hscroll"><button aria-label="向左"><i class="t-lt"></i></button><i class="track"></i><i class="thumb"></i><button aria-label="向右"><i class="t-rt"></i></button></div>
          <i class="corner"></i>
        </div>
      </div>
      <div class="rbars">
        <div class="vbar"><i class="vgrip"></i>
          <button aria-label="删除"><svg><use href="#erase"/></svg></button><button aria-label="复制"><svg><use href="#mcopy"/></svg></button><button aria-label="镜像"><svg><use href="#mirror"/></svg></button><button aria-label="偏移"><svg><use href="#offset"/></svg></button><button aria-label="阵列"><svg><use href="#array"/></svg></button><button aria-label="移动"><svg><use href="#move"/></svg></button><button aria-label="旋转"><svg><use href="#circ"/></svg></button><button aria-label="缩放"><svg><use href="#rect"/></svg></button><button aria-label="拉伸"><svg><use href="#rect"/></svg></button><button aria-label="修剪"><svg><use href="#extend"/></svg></button><button aria-label="延伸"><svg><use href="#extend"/></svg></button><button aria-label="打断于点"><svg><use href="#brkpt"/></svg></button><button aria-label="打断"><svg><use href="#brk"/></svg></button><button aria-label="合并"><svg><use href="#join"/></svg></button><button aria-label="倒角"><svg><use href="#chamf"/></svg></button><button aria-label="圆角"><svg><use href="#fillet"/></svg></button><button aria-label="光顺曲线"><svg><use href="#blend"/></svg></button><button aria-label="分解"><svg><use href="#explode"/></svg></button>
        </div>
        <div class="vbar"><i class="vgrip"></i>
          <button aria-label="前置"><svg><use href="#dr1"/></svg></button><button aria-label="后置"><svg><use href="#dr2"/></svg></button><button aria-label="置于对象之上"><svg><use href="#dr3"/></svg></button><button aria-label="置于对象之下"><svg><use href="#dr4"/></svg></button><i class="hsep"></i><button class="stack" aria-label="注释前置"><span class="abc">ABC</span><svg><use href="#drabc"/></svg></button><button aria-label="填充后置"><svg><use href="#drh"/></svg></button>
        </div>
      </div>
    </div>
    <div class="cmd">
      <div class="cmd-h"><i class="dots"></i><button aria-label="关闭命令行">X</button><button aria-label="自定义"><svg><use href="#wrench"/></svg></button></div>
      <div class="cmd-b"><button class="prompt" aria-label="最近命令">&gt;_</button><i class="tri grey"></i><input type="text" aria-label="命令行"></div>
    </div>
  </div>
  <aside class="panel">
    <h2><i class="dots"></i>理正<s>CAD</s>功能面板</h2>
    <div class="panel-b">
      <p class="pj">贯通-桥1</p>
      <a href="#" class="sel">选择工程</a>
      <ul>
        <li class="sub"><a href="#">平面图</a></li><li class="sub"><a href="#">分析评估</a></li><li class="sub"><a href="#">剖(断)面图</a></li><li class="sub"><a href="#">柱状图</a></li><li class="sub"><a href="#">原位曲线</a></li><li class="sub"><a href="#">室内试验</a></li><li class="sub"><a href="#">水文试验</a></li><li class="sub"><a href="#">打印工具</a></li><li><a href="#">保存成果文件</a></li><li><a href="#">设置签署信息</a></li><li class="sub"><a href="#">辅助工具</a></li><li><a href="#">返回数据管理</a></li><li><a href="#">帮助</a></li>
      </ul>
    </div>
  </aside>
  <div class="popup">
    <div class="popup-t"><span>柱状图</span><button aria-label="关闭"><svg viewBox="0 0 9 9"><path d="M1 1l7 7M8 1 1 8"/></svg></button></div>
    <div class="popup-b"><button class="cur">生成单钻孔柱状图</button><button>生成场区综合柱状图</button><button>生成试坑鉴定表</button></div>
  </div>
</div>

<footer class="status">
  <output>2022.8120, 360.6028, 0.0000</output>
  <button aria-label="推断约束"><svg><use href="#infer"/></svg></button><button class="on" aria-label="捕捉"><svg><use href="#snap"/></svg></button><button aria-label="栅格"><svg><use href="#grid"/></svg></button><button aria-label="正交"><svg><use href="#ortho"/></svg></button><button aria-label="极轴"><svg><use href="#polar"/></svg></button><button class="on" aria-label="对象捕捉"><svg><use href="#osnap"/></svg></button><button aria-label="三维捕捉"><svg><use href="#osnap3"/></svg></button><button class="on" aria-label="对象追踪"><svg><use href="#otrack"/></svg></button><button class="on" aria-label="动态UCS"><svg><use href="#ducs"/></svg></button><button class="on" aria-label="动态输入"><svg><use href="#dyn"/></svg></button><button aria-label="线宽"><svg><use href="#lwt"/></svg></button><button class="on" aria-label="透明度"><svg><use href="#tpy"/></svg></button><button aria-label="快捷特性"><svg><use href="#qp"/></svg></button><button aria-label="选择循环"><svg><use href="#sc"/></svg></button><button aria-label="注释监视器"><svg><use href="#plus"/></svg></button>
  <i class="sp"></i>
  <button class="model">模型</button><button aria-label="快速查看布局"><svg><use href="#lay1"/></svg></button><button aria-label="快速查看图形"><svg><use href="#lay2"/></svg></button><i class="g22"></i>
  <button class="scale"><svg><use href="#anno"/></svg><span>1:1</span><i class="tri black"></i></button><button aria-label="注释可见性"><svg><use href="#annob"/></svg></button><button class="dim" aria-label="自动缩放"><svg><use href="#anno"/></svg></button><i class="g6"></i>
  <button aria-label="切换工作空间"><svg><use href="#gear"/></svg></button><button aria-label="锁定"><svg class="mono"><use href="#lock"/></svg></button><button aria-label="硬件加速"><svg><use href="#dot"/></svg></button><button class="iso" aria-label="隔离对象"><svg><use href="#bulb"/></svg></button><button class="dd" aria-label="状态栏菜单"><i class="tri black"></i></button><button aria-label="全屏显示"><svg><use href="#win"/></svg></button>
</footer>
</body>
</html>
```
FILE: styles.css
```css
* { box-sizing: border-box; }
html, body { height: 100%; }
body {
  margin: 0; display: flex; flex-direction: column; min-height: 100vh; overflow: hidden;
  background: #6a6a6a; color: #000;
  font: 13px/16px "Liberation Mono", "Noto Sans CJK SC", monospace;
}
button { border: 0; padding: 0; margin: 0; background: none; font: inherit; color: inherit; display: flex; align-items: center; justify-content: center; flex: none; }
a { color: inherit; text-decoration: none; }
s { text-decoration: none; }
select, input { font: inherit; color: inherit; border: 0; background: none; margin: 0; padding: 0; appearance: none; min-width: 0; outline: 0; }
svg { width: 16px; height: 16px; fill: none; stroke: #3c3e48; flex: none; display: block; }
.defs { position: absolute; width: 0; height: 0; }
.tri { border: 4px solid transparent; border-top: 4px solid #444; border-bottom: 0; width: 0; height: 0; flex: none; }
.tri.black { border-top-color: #000; }
.tri.grey { border-top-color: #888; }
.dim { opacity: .5; }
.boxed { width: 14px; height: 14px; border: 1px solid #3c3e48; background: #f4f4f4; font: bold 12px/12px "Liberation Sans", sans-serif; color: #333; text-align: center; }
.stack { display: grid; place-content: center; }
.stack > * { grid-area: 1 / 1; }
.glyph-a { font: bold 14px/14px "Liberation Sans", sans-serif; color: #333; align-self: start; }
.glyph-big { font: bold 18px/18px "Liberation Sans", sans-serif; color: #333; }
.abc { font: bold 7px/8px "Liberation Sans", sans-serif; align-self: start; }

/* title bar and menu */
.top { display: flex; height: 55px; flex: none; border-bottom: 1px solid #333; background: linear-gradient(#a6a6a6, #9b9da4 8px, #969696 18px, #868886 30px, #70747a 42px, #575757 48px); }
.app { width: 41px; height: 41px; border: 1px solid #222; background: linear-gradient(#c4c4c4, #8a8a8a); }
.app svg { width: 39px; height: 39px; stroke: none; }
.top-rows { flex: 1; min-width: 0; }
.title-row { display: flex; align-items: center; height: 28px; }
.qat { display: flex; padding-left: 5px; width: 247px; flex: none; }
.qat button { width: 30px; height: 28px; }
.qat .dd { width: 15px; }
.qat svg { width: 20px; height: 20px; }
.ws { display: flex; align-items: center; width: 224px; height: 28px; flex: none; border: 1px solid #555c68; background: linear-gradient(#eceef2, #d0d2d8); padding: 0 5px 0 3px; font-size: 14px; }
.ws svg { width: 20px; height: 20px; }
.ws select { flex: 1; padding-left: 2px; }
.more { width: 18px; }
h1 { margin: 0; flex: 1; min-width: 0; padding-left: 162px; color: #fff; font-size: 15px; line-height: 20px; font-weight: bold; white-space: nowrap; }
h1 b { font-size: 16px; }
h1 span { padding-left: 36px; }
.info { display: flex; align-items: center; height: 28px; width: 553px; flex: none; }
.tri-r { border: 5px solid transparent; border-left: 6px solid #000; border-right: 0; margin-right: 5px; flex: none; }
.info input { width: 225px; height: 28px; flex: none; border: 1px solid #555c68; background: #f8f8f8; padding-left: 5px; font-style: italic; font-size: 14px; }
.info input::placeholder { color: #777; }
.info button { width: 29px; }
.info svg { width: 20px; height: 20px; }
.info .login { width: 133px; justify-content: flex-start; gap: 8px; color: #fff; font-size: 14px; padding-left: 5px; }
.info .dd { width: 16px; }
.info .dd + .q { margin-left: 19px; }
.info .q { width: 22px; height: 22px; border: 2px solid #333; border-radius: 11px; background: #f4f4f8; color: #2458b0; font: bold 16px "Liberation Sans", sans-serif; }
.info .dd:last-child { width: 24px; }
.wc { display: flex; align-items: center; justify-content: flex-end; gap: 6px; width: 52px; flex: none; margin: 0 5px 0 auto; color: #222; font: bold 13px "Liberation Sans", sans-serif; }
.title-row .wc { margin-left: 11px; }
.wc svg { width: 12px; height: 12px; }
.wc i { width: 11px; height: 3px; margin-top: 8px; background: #333; }
.menu { display: flex; height: 27px; align-items: center; padding: 2px 0 0 12px; gap: 20px; color: #fff; font-size: 15px; }
.menu a { width: 56px; white-space: nowrap; flex: none; }
.menu s { font-size: 13px; }

/* file tabs */
.filetabs { display: flex; height: 34px; flex: none; align-items: flex-end; padding: 0 0 1px 18px; background: linear-gradient(#a6a6a6 9px, #979ba8 10px, #979ba8 16px, #989898 17px); }
.ft { display: grid; width: 162px; height: 28px; color: #444; grid-template-columns: 22px 1fr 36px; align-items: center; margin-right: -9px; }
.ft > svg { grid-area: 1 / 1 / 2 / 4; width: 100%; height: 28px; stroke: #bbb; fill: #a2a2a2; }
.ft > span { grid-area: 1 / 2; }
.ft em { grid-area: 1 / 3; font: bold 17px "Liberation Sans", sans-serif; color: #888; }
.ft.on { width: 174px; color: #000; z-index: 1; margin-right: -4px; }
.ft.on > svg { fill: #dcdce0; stroke: #eee; }
.addtab { height: 26px; width: 32px; }
.addtab svg { width: 30px; height: 20px; }

/* toolbars */
.bars { flex: none; display: flex; flex-direction: column; gap: 3px; padding: 4px 0 3px; }
.barrow { display: flex; gap: 1px; }
.bar { display: flex; align-items: center; height: 24px; border: 1px solid #333; border-left: 0; background: #ebebed; padding-right: 1px; }
.bar > button { width: 23px; height: 22px; }
.bar > .dd { width: 13px; }
.grip { width: 9px; height: 22px; flex: none; background: linear-gradient(90deg, #505050 2px, transparent 2px 7px, #505050 7px), repeating-linear-gradient(#505050 0 1px, transparent 1px 2px), repeating-linear-gradient(90deg, #505050 0 1px, #111 1px 2px); }
.sep { width: 6px; height: 18px; flex: none; background: linear-gradient(90deg, transparent 2px, #888 2px 3px, #fff 3px 4px, transparent 4px); }
.wide .sep { width: 8px; background-position: 1px 0; background-repeat: no-repeat; }
.combo { display: flex; align-items: center; height: 22px; border: 1px solid #666; border-top: 2px solid #555; background: #f8f8f8; padding-left: 4px; gap: 1px; }
.combo select { flex: 1; height: 19px; }
.combo svg { margin-right: 1px; }
.arrow { width: 19px; height: 19px; flex: none; background: #d4d3ce; border: 1px solid #fff; border-right: 2px solid #555; border-bottom: 2px solid #555; display: grid; place-items: center; }
.arrow::after { content: ""; border: 4px solid transparent; border-top-color: #000; border-bottom: 0; }
.w-style { width: 118px; }
.w-style.zh { padding-left: 17px; font-size: 15px; }
.w-style.in { padding-left: 17px; }
.w-ws { width: 172px; padding-left: 7px; font-size: 14px; }
.w-layer { width: 299px; }
.w-color { width: 148px; }
.w-lt { width: 158px; }
.w-lw { width: 122px; }
.w-ps { width: 118px; padding-left: 8px; }
.combo.off { background: #d4d3ce; color: #888; }
.off .arrow::after { border-top-color: #888; }
.off select { opacity: 1; }
.sw { width: 11px; height: 11px; background: #000; flex: none; margin-right: 3px; }
.ln { width: 60px; height: 1px; background: #000; flex: none; margin-right: 4px; }
.ln.short { width: 34px; }

/* work area */
.work { flex: 1; min-height: 0; display: flex; gap: 5px; position: relative; padding-bottom: 1px; }
.main { flex: 1; min-width: 0; display: flex; flex-direction: column; gap: 4px; }
.dock { flex: 1; min-height: 0; display: flex; gap: 5px; align-items: stretch; }
.vbar { width: 25px; border: 1px solid #333; background: #ebebed; display: flex; flex-direction: column; align-items: center; align-self: flex-start; }
.vbar button { width: 23px; height: 22px; }
.vgrip { width: 23px; height: 8px; flex: none; background: linear-gradient(90deg, #4e4e4e 4px, transparent 4px 17px, #4e4e4e 17px), linear-gradient(#4e4e4e 2px, transparent 2px 6px, #4e4e4e 6px), repeating-linear-gradient(90deg, #4e4e4e 0 1px, #111 1px 2px); }
.hsep { width: 19px; height: 2px; margin: 1px 0; background: #888; border-bottom: 1px solid #fff; flex: none; }
.rbars { display: flex; flex-direction: column; gap: 1px; width: 27px; flex: none; margin-left: -1px; }
.doc { flex: 1; min-width: 0; display: flex; flex-direction: column; border: 1px solid #444; border-top: 2px solid #444; border-right: 2px solid #fff; border-bottom: 1px solid #fff; background: #d4d3ce; }
.view { flex: 1; min-height: 0; display: flex; }
.canvas { flex: 1; position: relative; overflow: hidden; background: #f8f8f8; }
.vplabel { position: absolute; left: 4px; top: 6px; font: 12px/16px "Liberation Sans", "Noto Sans CJK SC", sans-serif; }
.vscroll { width: 20px; display: flex; flex-direction: column; }
.vscroll button, .hscroll button, .thumb { width: 20px; height: 20px; flex: none; background: #d4d3ce; border: 1px solid #fff; border-right: 2px solid #666; border-bottom: 2px solid #666; }
.track { flex: 1; background: repeating-conic-gradient(#d8d7d2 0 25%, #f6f6f4 0 50%) 0 0 / 2px 2px; }
.track.gap { flex: none; height: 5px; }
.t-up, .t-dn, .t-lt, .t-rt { border: 5px solid transparent; }
.t-up { border-bottom-color: #000; border-top: 0; }
.t-dn { border-top-color: #000; border-bottom: 0; }
.t-lt { border-right-color: #000; border-left: 0; }
.t-rt { border-left-color: #000; border-right: 0; }
.layout { display: flex; height: 21px; flex: none; border-top: 1px solid #444; padding-bottom: 1px; font: 14px/18px "Liberation Sans", "Noto Sans CJK SC", sans-serif; }
.nv { width: 18px; height: 18px; border: 1px solid #fff; border-right-color: #777; border-bottom-color: #777; }
.nv svg { width: 12px; height: 12px; fill: #888; stroke: none; }
.lt { display: grid; width: 58px; margin-right: -2px; place-items: center; }
.lt > * { grid-area: 1 / 1; }
.lt svg { width: 100%; height: 19px; stroke: #444; }
.lt.on svg { fill: #f8f8f8; }
.lt.on { z-index: 1; }
.split { margin-left: auto; width: 7px; border: 1px solid #fff; border-right: 2px solid #555; }
.hscroll { width: 547px; display: flex; }
.hscroll button, .hscroll .thumb { height: 19px; }
.corner { width: 20px; }

/* borehole report */
.paper { position: absolute; left: 530px; top: 0; width: 565px; bottom: 0; border: 2px solid #000; border-top-width: 1px; padding: 12px 0 0 64px; }
.sheet { width: 486px; border: 2px solid #000; font: 9px/11px "Liberation Sans", "Noto Sans CJK SC", sans-serif; }
.sheet-title { height: 54px; border-bottom: 2px solid #000; padding: 18px 8px 0 0; }
.sheet h2 { margin: 0; font-size: 15px; line-height: 20px; font-weight: normal; text-align: center; padding-left: 8px; }
.sheet p { margin: 0; padding-top: 1px; text-align: right; line-height: 12px; }
.sheet table { width: 482px; table-layout: fixed; border-collapse: separate; border-spacing: 0; }
.sheet th, .sheet td { padding: 0; border-right: 1px solid #000; border-bottom: 1px solid #000; text-align: center; vertical-align: middle; font-weight: normal; line-height: 11px; white-space: nowrap; }
.meta th, .meta td { padding-top: 5px; }
.sheet tr > :last-child:not([rowspan]) { border-right: 0; }
.sheet .thick > * , .meta .tall { border-bottom-width: 2px; }
.sheet .meta .proj { text-align: left; padding-left: 36px; }
.sheet .strata tr:nth-child(2) td[rowspan="10"] { border-bottom-width: 2px; }
.foot th, .foot td { border-bottom: 0 !important; padding-top: 2px; }
.strata .sm { font-size: 8px; }
.strata b { display: inline-block; width: 13px; height: 13px; border: 1px solid #000; border-radius: 7px; font-weight: normal; line-height: 11px; vertical-align: middle; }
.strata sub { font-size: 7px; line-height: 1px; }
.sheet .lo { vertical-align: bottom; }
.sheet .n { padding-right: 3px; }
.strata .plot { vertical-align: top; line-height: 1px; }
.strata .plot svg { width: 100%; height: auto; stroke: none; }
.sheet .vs { border-bottom-color: #e00; vertical-align: bottom; }
.vs span { display: flex; justify-content: center; gap: 12px; padding-top: 13px; }
.vs u { text-decoration: none; }
.c26 { width: 26px; } .c27 { width: 27px; } .c30 { width: 30px; } .c32 { width: 32px; } .c35 { width: 35px; } .c42 { width: 42px; } .c46 { width: 46px; } .c49 { width: 49px; } .c51 { width: 51px; } .c54 { width: 54px; } .c59 { width: 59px; } .c69 { width: 69px; } .c74 { width: 74px; } .c81 { width: 81px; } .c84 { width: 84px; } .c129 { width: 129px; }
.r18 { height: 18px; } .r22 { height: 22px; } .r23 { height: 23px; } .r24 { height: 24px; } .r25 { height: 25px; } .r30 { height: 30px; } .r47 { height: 47px; } .r51 { height: 51px; } .r59 { height: 59px; } .r64 { height: 64px; } .r80 { height: 80px; } .r81 { height: 81px; } .r94 { height: 94px; }

/* canvas overlays */
.ucs { position: absolute; left: 13px; bottom: 12px; width: 76px; height: 76px; }
.ucs2 { position: absolute; right: 0; bottom: 0; width: 50px; height: 88px; }
.cube { position: absolute; right: 12px; top: 16px; width: 142px; display: grid; grid-template-columns: 30px 1fr 30px; place-items: center; row-gap: 16px; font: bold 20px/24px "Noto Sans CJK SC", sans-serif; color: #c6ccd6; }
.cube .n { grid-area: 1 / 2; }
.cube .w { grid-area: 2 / 1; }
.cube .e { grid-area: 2 / 3; }
.cube button { grid-area: 2 / 2; width: 52px; height: 52px; border: 1px solid #a4a4a8; background: #e8e8ec; font-size: 30px; font-weight: normal; color: #b4bac6; }
.cube .s { grid-area: 3 / 2; }
.cube .wcs { grid-area: 4 / 2; background: #eaeaee; border-radius: 4px; padding: 0 18px 0 4px; font: 12px/14px "Liberation Sans", sans-serif; color: #aaa; justify-self: center; }
.navbar { position: absolute; right: 2px; top: 225px; width: 36px; height: 202px; border: 2px solid #ccc; border-radius: 5px; stroke: none; }

/* command line */
.cmd { display: flex; height: 51px; flex: none; border-top: 1px solid #888; }
.cmd-h { width: 68px; display: flex; align-items: center; padding-left: 5px; color: #fff; background: linear-gradient(#888, #80847f 10px, #6c6c6c 20px, #59626c 26px, #555 30px, #444 40px, #3c3e48); font: bold 15px "Liberation Sans", sans-serif; }
.cmd-h button { width: 28px; }
.cmd-h svg { width: 20px; height: 20px; }
.dots { width: 6px; height: 22px; background: repeating-linear-gradient(transparent 0 2px, #5c5c5c 2px 4px), linear-gradient(90deg, #ccc 2px, transparent 2px 4px, #ccc 4px); }
.cmd-b { flex: 1; display: flex; align-items: center; background: #f8f8f8; border-radius: 3px; padding: 0 6px 3px; gap: 4px; }
.cmd-b input { flex: 1; height: 40px; }
.prompt { width: 19px; height: 17px; border: 2px solid #ccc; background: #e8e8e8; color: #555; font: bold 10px "Liberation Mono", monospace; }

/* function panel */
.panel { width: 202px; flex: none; display: flex; flex-direction: column; padding-top: 2px; font: 12px/18px "Liberation Sans", "Noto Sans CJK SC", sans-serif; }
.panel h2 { margin: 0; height: 22px; background: #a4a4a4; border-radius: 5px 5px 0 0; display: flex; align-items: center; font-size: 16px; line-height: 20px; padding-left: 3px; }
.panel h2 s { font: bold 14px/20px "Liberation Mono", monospace; }
.panel h2 .dots { width: 4px; height: 12px; margin-right: 6px; background: repeating-linear-gradient(transparent 0 1px, #a4a4a4 1px 2px), linear-gradient(90deg, #222 1px, transparent 1px 3px, #222 3px); }
.panel-b { flex: 1; background: #f8f8f8; border-radius: 4px; margin-top: -2px; }
.pj { margin: 0; height: 26px; padding: 3px 6px; border-bottom: 1px solid #000; }
.sel { display: block; height: 24px; padding: 3px 21px; border-bottom: 1px solid #ccc; }
.panel ul { list-style: none; margin: 0; padding: 4px 0; }
.panel li { height: 18px; padding-left: 21px; position: relative; }
.sub::before { content: ""; position: absolute; left: 3px; top: 4px; border: 5px solid transparent; border-left: 6px solid #000; border-right: 0; }

.popup { position: absolute; right: 202px; top: 129px; width: 144px; height: 99px; background: #c4c4c4; border: 2px solid #e4e4e4; border-right-color: #555; border-bottom-color: #555; padding: 1px 2px; font: 12px/20px "Liberation Sans", "Noto Sans CJK SC", sans-serif; }
.popup-t { height: 19px; display: flex; align-items: center; justify-content: space-between; padding: 0 1px 0 2px; background: linear-gradient(90deg, #888 0 50px, #979ba8 52px 60px, #a4a4a4 62px 92px, #b8b8b8 94px 116px, #b0b8c8 118px); color: #d4d3ce; font-weight: bold; font-size: 15px; }
.popup-t button { width: 13px; height: 15px; background: #d4d3ce; border: 1px solid #fff; border-right-color: #444; border-bottom-color: #444; }
.popup-t svg { width: 9px; height: 9px; stroke: #000; stroke-width: 2; }
.popup-b { padding: 6px 4px 0; }
.popup-b button { width: 100%; height: 22px; justify-content: flex-start; padding-left: 9px; border: 1px solid #e0e4ea; border-right-color: #333; border-bottom-color: #333; white-space: nowrap; }
.popup-b .cur { border-color: #333 #e0e4ea #e0e4ea #333; }

/* status bar */
.status { height: 20px; flex: none; display: flex; overflow: hidden; border-top: 1px solid #000; background: linear-gradient(#9c9c9c, #868686 8px, #808684); }
.status output { width: 239px; padding: 2px 12px; white-space: nowrap; }
.status button { width: 22px; height: 19px; border-right: 1px solid #777; background: linear-gradient(#ccc, #b4b8c0 5px, #aaa); }
.status .on { background: linear-gradient(#d4eef4, #9ccfe0); }
.status .model { width: 36px; font-size: 15px; line-height: 18px; }
.status .scale { width: 60px; gap: 2px; font-size: 14px; }
.status .scale span { padding-top: 3px; }
.status .iso { width: 32px; box-shadow: inset 0 0 0 1px #555; }
.status .dd { width: 12px; }
.status .dim { opacity: .8; color: #888; }
.mono { filter: grayscale(1); }
.sp { flex: 1; }
.g22 { width: 22px; }
.g6 { width: 6px; }
```
